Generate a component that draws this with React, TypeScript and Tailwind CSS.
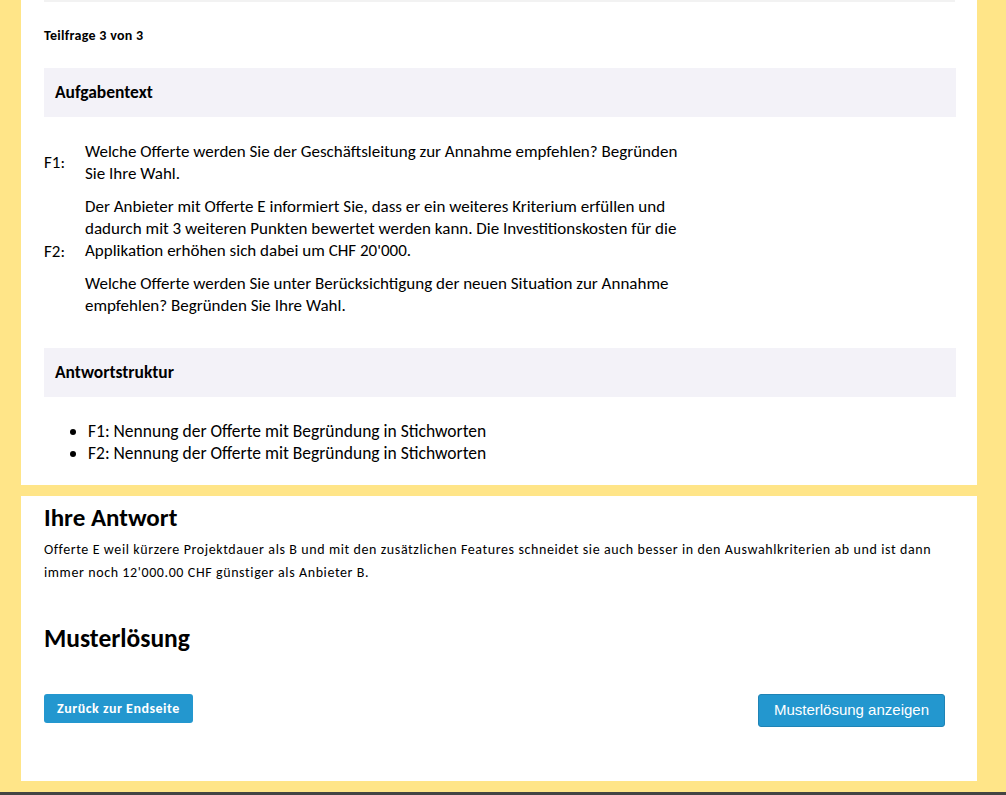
import React from "react";

const font = { fontFamily: 'Carlito, Lato, "Open Sans", sans-serif' };

export default function App() {
  return (
    <div className="min-h-[795px] bg-[#ffe588] flex flex-col" style={font}>
      <div className="mx-[21px] w-[956px] bg-white px-[23px] pb-[21px]">
        <div className="h-[2px] w-[911px] bg-[#f2f2f2]" />
        <div className="pt-[25px] text-[14px] tracking-[0.3px] font-bold text-black leading-[18px]">Teilfrage 3 von 3</div>
        <div className="mt-[23px] h-[49px] w-[912px] bg-[#f3f2f8] flex items-center px-[11px] text-[17.5px] font-bold text-black">
          Aufgabentext
        </div>
        <div className="mt-[23px] grid grid-cols-[41px_605px] items-center text-[17px] leading-[22px] text-black">
          <div>F1:</div>
          <div className="py-[1px]">Welche Offerte werden Sie der Geschäftsleitung zur Annahme empfehlen? Begründen Sie Ihre Wahl.</div>
          <div>F2:</div>
          <div className="pt-[10px]">
            <p>Der Anbieter mit Offerte E informiert Sie, dass er ein weiteres Kriterium erfüllen und dadurch mit 3 weiteren Punkten bewertet werden kann. Die Investitionskosten für die Applikation erhöhen sich dabei um CHF 20'000.</p>
            <p className="mt-[11px]">Welche Offerte werden Sie unter Berücksichtigung der neuen Situation zur Annahme empfehlen? Begründen Sie Ihre Wahl.</p>
          </div>
        </div>
        <div className="mt-[31px] h-[49px] w-[912px] bg-[#f3f2f8] flex items-center px-[11px] text-[17.5px] font-bold text-black">
          Antwortstruktur
        </div>
        <ul className="mt-[23px] list-disc pl-[44px] text-[17.5px] leading-[22px] text-black">
          <li>F1: Nennung der Offerte mit Begründung in Stichworten</li>
          <li>F2: Nennung der Offerte mit Begründung in Stichworten</li>
        </ul>
      </div>
      <div className="mx-[21px] mt-[11px] w-[956px] h-[285px] bg-white px-[23px] pt-[7px]">
        <h2 className="text-[25px] font-bold leading-[30px] text-black">Ihre Antwort</h2>
        <p className="mt-[5px] text-[14px] tracking-[0.6px] leading-[23px] text-black w-[912px]">
          Offerte E weil kürzere Projektdauer als B und mit den zusätzlichen Features schneidet sie auch besser in den Auswahlkriterien ab und ist dann immer noch 12'000.00 CHF günstiger als Anbieter B.
        </p>
        <h2 className="mt-[40px] text-[25.5px] font-bold leading-[30px] text-black">Musterlösung</h2>
        <div className="mt-[40px] flex items-start justify-between w-[901px]">
          <button className="h-[29px] px-[13px] rounded-[3px] bg-[#2397cf] text-white text-[14px] tracking-[0.5px] font-bold">Zurück zur Endseite</button>
          <button className="h-[33px] px-[15px] rounded-[3px] bg-[#2397cf] border border-[#1f83b5] text-white text-[15px]" style={{ fontFamily: '"Liberation Sans", Arial, sans-serif' }}>Musterlösung anzeigen</button>
        </div>
      </div>
      <div className="h-[11px]" />
      <div className="h-[3px] bg-[#444444]" />
    </div>
  );
}
